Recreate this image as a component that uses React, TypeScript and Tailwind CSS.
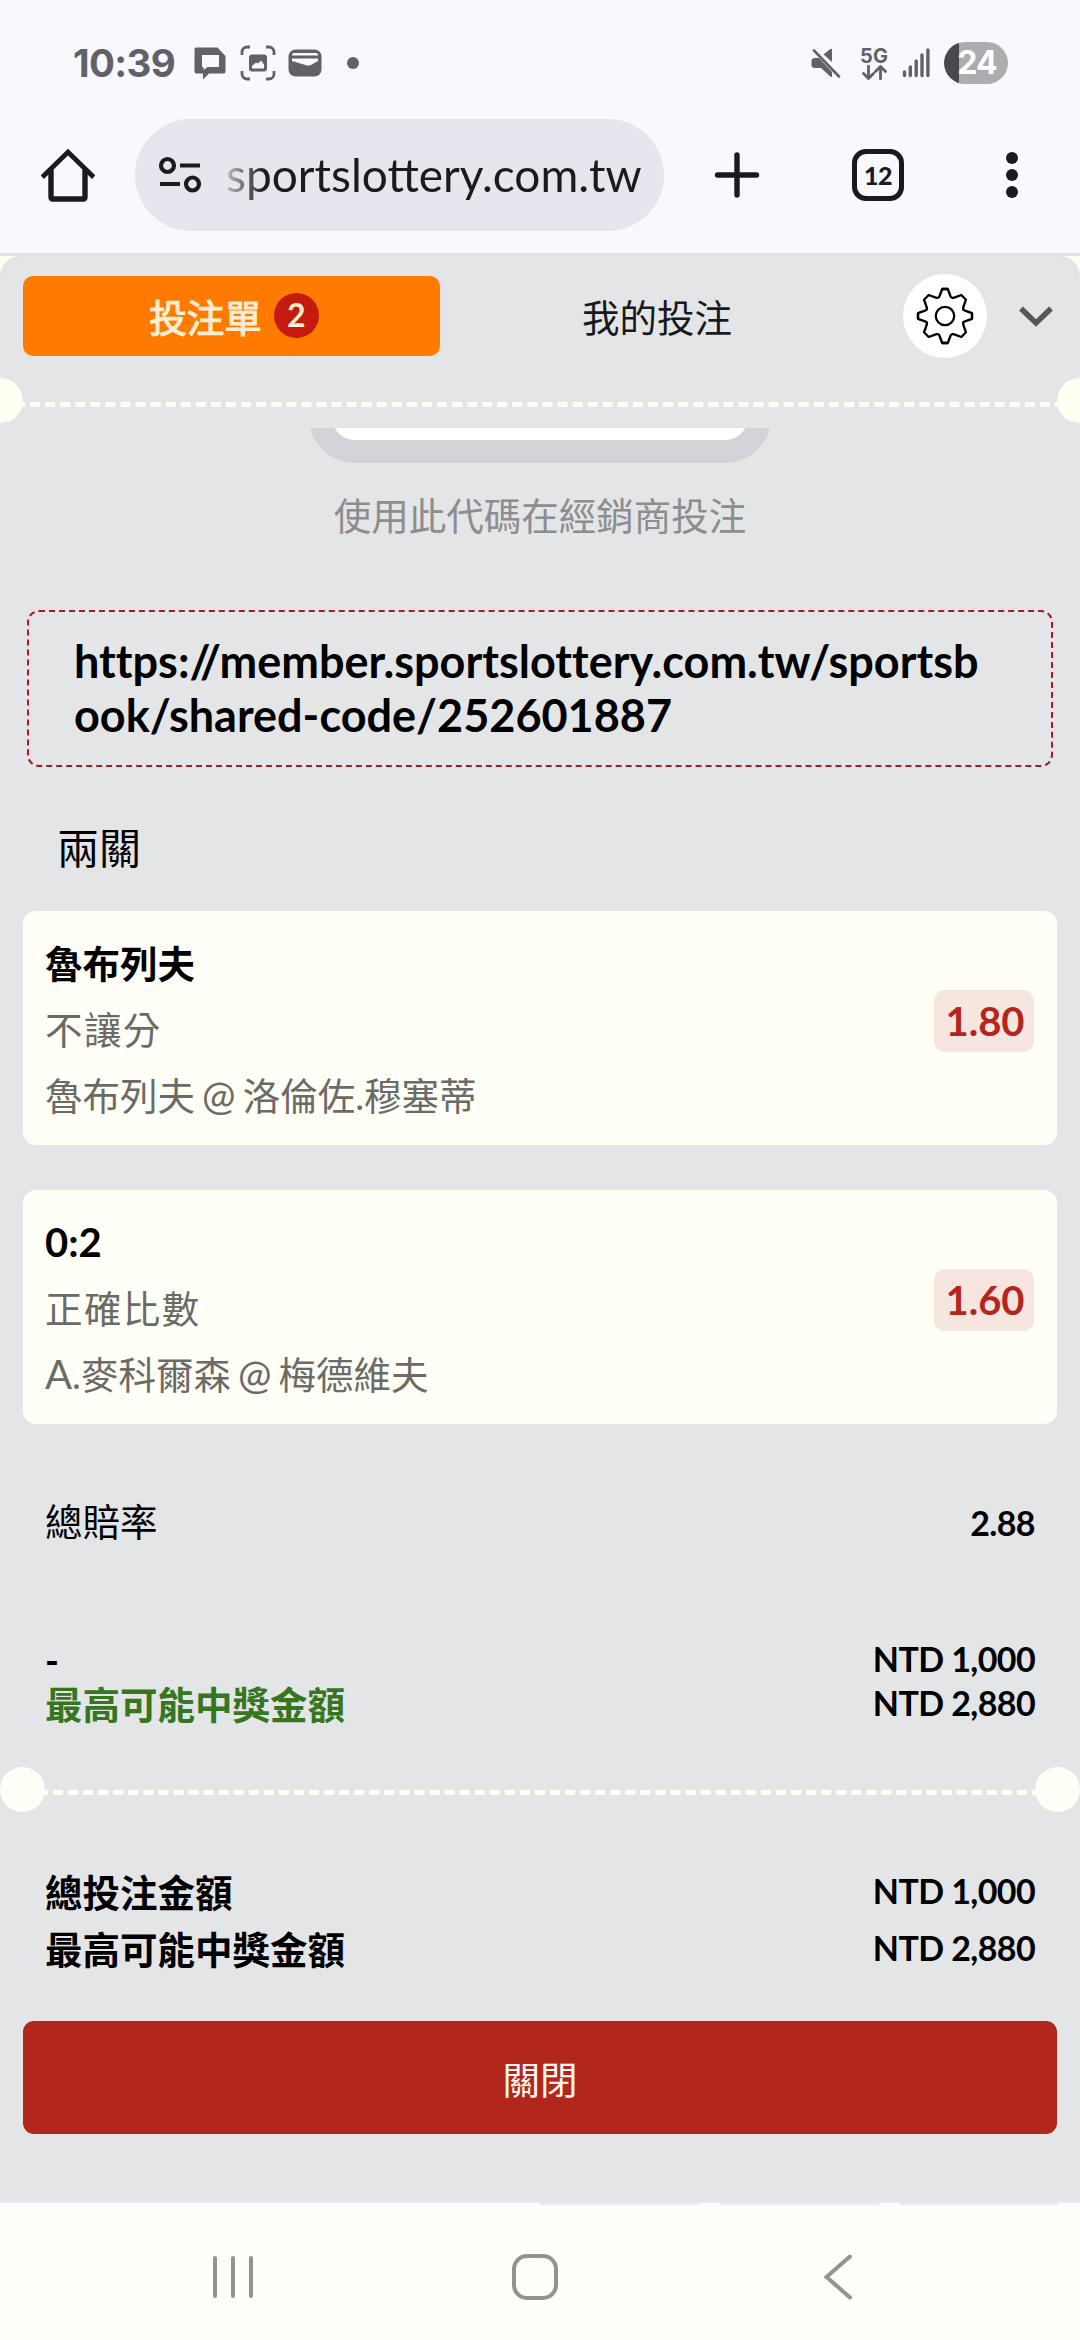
import React from "react";

const CJK = "font-['Lato','Noto_Sans_CJK_TC',sans-serif]";

function StatusBar() {
  return (
    <div className="flex h-[119px] items-start justify-between pt-[42px] pr-[72px] pl-[73px] text-[#626167]">
      <div className="flex h-[42px] items-center">
        <span className="w-[121px] whitespace-nowrap font-['Inter'] text-[38.5px] leading-none font-bold tracking-[-0.6px]">10:39</span>
        <svg width="32" height="34" viewBox="0 0 32 34" fill="currentColor">
          <path fillRule="evenodd" d="M2 1.500h21.500l8 8.500v15.500a2 2 0 0 1-2 2H15l-6 6v-6H2.500a2 2 0 0 1-2-2V3A1.500 1.500 0 0 1 2 1.500ZM8 9v12h1.500v3l4-3H25V9Z" />
        </svg>
        <svg className="ml-[14px]" width="36" height="36" viewBox="0 0 36 36" fill="none">
          <path d="M2 10V7a5 5 0 0 1 5-5h3M26 2h3a5 5 0 0 1 5 5v3M34 26v3a5 5 0 0 1-5 5h-3M10 34H7a5 5 0 0 1-5-5v-3" stroke="currentColor" strokeWidth="2.800" />
          <path fillRule="evenodd" d="M12 9.500h12a3 3 0 0 1 3 3v11a3 3 0 0 1-3 3H12a3 3 0 0 1-3-3v-11a3 3 0 0 1 3-3Zm0 14h12v-4l-3-4-3 3-2-1-4 3.500Z" fill="currentColor" />
        </svg>
        <svg className="ml-[12px]" width="34" height="28" viewBox="0 0 34 28" fill="none">
          <rect x="1.500" y="1.500" width="31" height="25" rx="6" fill="currentColor" stroke="currentColor" strokeWidth="2" />
          <path d="M4 6.500c0-2 1-2.500 3-2.500h20c2 0 3 .5 3 2.500ZM4 9.500h26v2.500l-8 4.500h-3L4 12Z" fill="#f9f8ff" />
        </svg>
        <span className="ml-[25px] h-3 w-3 rounded-full bg-current" />
      </div>
      <div className="flex h-[42px] items-center">
        <svg width="30" height="30" viewBox="0 0 30 30" fill="currentColor">
          <path d="M21 1v13L12.500 6.500 19 1.300Q20.500.3 21 1ZM4 10h4l13 14v4q0 1.500-1.500.8L10 20H4q-3.500 0-3.500-3v-4q0-3 3.500-3Z" />
          <path d="m3 2.500 25 26" stroke="currentColor" strokeWidth="2.600" strokeLinecap="round" />
        </svg>
        <div className="ml-[18px] flex w-[30px] flex-col items-center">
          <span className="font-['Inter'] text-[20px] leading-[18px] font-bold">5G</span>
          <svg width="25" height="15" viewBox="0 0 25 15" fill="none" stroke="currentColor" strokeWidth="2.800" strokeLinecap="round" strokeLinejoin="round">
            <path d="M6.500 1v12M1.500 8.500l5 5 5-5M18.500 14V2M13.500 6.500l5-5 5 5" />
          </svg>
        </div>
        <svg className="ml-[13px]" width="29" height="30" viewBox="0 0 29 30" stroke="currentColor" strokeWidth="3.400" strokeLinecap="round">
          <path d="M2.500 24v3.500M8.300 19v8.500M14.200 13v14.500M20 7v20.500M25.900 2v25.500" />
        </svg>
        <div className="ml-[13px] flex h-[42px] w-16 items-center justify-center rounded-full bg-linear-to-r from-[#49484c] from-[24%] to-[#adacb1] to-[24%] pl-[2px] font-['Inter'] text-[32px] leading-none font-bold tracking-[-1px] text-white">24</div>
      </div>
    </div>
  );
}

function AddressBar() {
  return (
    <div className="flex h-[112px] items-center pr-[62px] pl-[41px] text-[#1a1a20]">
      <svg width="54" height="54" viewBox="0 0 54 54" fill="none" stroke="currentColor" strokeWidth="5.400" strokeLinejoin="round">
        <path d="M3 27.500 27 4l24 23.500" strokeLinejoin="miter" strokeLinecap="square" strokeWidth="4.800" />
        <path d="M10 22v27.500a1.500 1.500 0 0 0 1.500 1.500h31a1.500 1.500 0 0 0 1.500-1.500V22" />
      </svg>
      <div className="ml-[40px] flex h-[112px] w-[529px] items-center rounded-full bg-[#e7e5ed] pl-[23px]">
        <svg width="44" height="38" viewBox="0 0 44 38" fill="none" stroke="currentColor" strokeWidth="4.200">
          <circle cx="9.500" cy="9.500" r="6.500" />
          <circle cx="34.500" cy="28" r="6.500" />
          <path d="M22 9.500h20M2 28h20" />
        </svg>
        <span className="ml-[24px] bg-linear-to-r from-[#1a1a20]/20 to-[#1a1a20] to-[38px] bg-clip-text font-['Lato'] text-[46px] leading-[56px] text-transparent">sportslottery.com.tw</span>
      </div>
      <svg className="ml-[50px] shrink-0" width="46" height="48" viewBox="0 0 46 48" stroke="currentColor" strokeWidth="5.400" strokeLinecap="round">
        <path d="M23 4v40M3.500 24h39" />
      </svg>
      <div className="ml-[92px] flex h-[52px] w-[52px] shrink-0 items-center justify-center rounded-[14px] border-[5.500px] border-current font-['Lato'] text-[25px] leading-none font-black tracking-[-0.5px]">12</div>
      <svg className="ml-[102px] shrink-0" width="12" height="48" viewBox="0 0 12 48" fill="currentColor">
        <circle cx="6" cy="7" r="6" />
        <circle cx="6" cy="24" r="6" />
        <circle cx="6" cy="41" r="6" />
      </svg>
    </div>
  );
}

function Gear() {
  const quarter = "M-2.800-27H2.800L5.400-20Q6-17.600 8.500-18.200L16.300-21 21-16.300 18.200-8.500Q17.600-6 20-5.400L27-2.800V2.800";
  return (
    <svg width="58" height="58" viewBox="-29 -29 58 58" fill="none" stroke="#000" strokeWidth="2.300" strokeLinejoin="round">
      <circle r="9.200" />
      <path d={quarter} />
      <path d={quarter} transform="rotate(90)" />
      <path d={quarter} transform="rotate(180)" />
      <path d={quarter} transform="rotate(270)" />
    </svg>
  );
}

function Tabs() {
  return (
    <div className="mb-[2px] flex h-[120px] shrink-0 items-center pl-[23px]">
      <div className="flex h-[80px] w-[417px] items-center justify-center rounded-[10px] bg-[#ff7a00] pl-[5px] text-[37.500px] leading-none text-[#ffedd2]">
        <span className="pt-[3px] [-webkit-text-stroke:1.2px_#ffedd2]">投注單</span>
        <span className="mb-[2px] ml-[12px] flex h-[45px] w-[45px] items-center justify-center rounded-full bg-[#c41a10] text-[32px] font-bold">2</span>
      </div>
      <div className="w-[434px] pt-[3px] text-center text-[37.500px] leading-none text-[#17191c]">我的投注</div>
      <div className="ml-[29px] flex h-[84px] w-[84px] items-center justify-center rounded-full bg-white">
        <Gear />
      </div>
      <svg className="ml-[31px]" width="36" height="22" viewBox="0 0 36 22" fill="none" stroke="#55585a" strokeWidth="5.500">
        <path d="m3 3.500 15 14.500L33 3.500" />
      </svg>
    </div>
  );
}

/* Latin letters, digits and @ are set slightly larger than the Chinese characters around them. */
function MixedText({ text }: { text: string }) {
  return (
    <>
      {text.split(/([A-Z0-9:@]+)/).map((part, i) =>
        i % 2 ? (
          <span key={i} className="text-[40px] leading-none">
            {part}
          </span>
        ) : (
          part
        ),
      )}
    </>
  );
}

function BetCard({ title, market, match, odds }: { title: string; market: string; match: string; odds: string }) {
  return (
    <div className="flex h-[234px] items-center justify-between rounded-[13px] bg-[#fffef7] pr-[23px] pl-[22px]">
      <div className="flex flex-col pt-[4px] text-[37.500px] leading-[66px]">
        <span className="font-bold text-black">
          <MixedText text={title} />
        </span>
        <span className="tracking-[1.400px] text-[#6b6b66]">{market}</span>
        <span className="[word-spacing:-2.500px] text-[#6b6b66]">
          <MixedText text={match} />
        </span>
      </div>
      <div className="mb-[14px] flex h-[62px] w-[100px] items-center justify-center rounded-[11px] bg-[#f7e6df] pl-[2px] text-[40px] font-bold text-[#b3261e]">{odds}</div>
    </div>
  );
}

function NavBar() {
  return (
    <div className="flex h-[137px] flex-col bg-[#fffdf7]">
      <div className="flex h-[2px] gap-[21px] pl-[540px]">
        <span className="w-[159px] bg-[#ececec]" />
        <span className="w-[159px] bg-[#ececec]" />
        <span className="w-[158px] bg-[#ececec]" />
      </div>
      <div className="flex items-start pt-[48px] pl-[211px]">
        <svg width="43" height="48" viewBox="0 0 43 48" stroke="#93928c" strokeWidth="4" strokeLinecap="round">
          <path d="M4 5v38M22 5v38M40 5v38" />
        </svg>
        <svg className="ml-[257px]" width="48" height="48" viewBox="0 0 48 48" fill="none" stroke="#93928c" strokeWidth="4">
          <rect x="3" y="3" width="42" height="42" rx="13" />
        </svg>
        <svg className="ml-[264px]" width="32" height="48" viewBox="0 0 32 48" fill="none" stroke="#93928c" strokeWidth="4" strokeLinecap="round">
          <path d="M27 3.500 3.500 24 27 44.500" />
        </svg>
      </div>
    </div>
  );
}

function AmountRow({ label, value, className = "", labelClass = "", valueClass = "" }: { label: string; value: string; className?: string; labelClass?: string; valueClass?: string }) {
  return (
    <div className={"flex items-center justify-between " + className}>
      <span className={"text-[37.500px] " + labelClass}>{label}</span>
      <span className={"text-[34px] font-bold tracking-[-0.6px] " + valueClass}>{value}</span>
    </div>
  );
}

export default function App() {
  return (
    <div className={"flex h-[2340px] w-[1080px] flex-col overflow-hidden bg-[#f9f8ff] text-black " + CJK}>
      <StatusBar />
      <AddressBar />
      <div className="mt-[22px] h-[3px] shrink-0 bg-[#e3e1e8]" />
      <div className="h-[1947px] shrink-0 bg-[#fffef2]">
        <div className="flex h-[1947px] flex-col rounded-t-[20px] bg-[#e4e5e7]">
          <Tabs />
          <div className="flex h-[45px] shrink-0 items-center">
            <span className="h-[45px] w-[23px] shrink-0 rounded-r-full bg-[#fffef2]" />
            <span className="-mx-2 mt-[7px] flex-1 border-t-[5px] border-dashed border-[#fffef2]" />
            <span className="h-[45px] w-[23px] shrink-0 rounded-l-full bg-[#fffef2]" />
          </div>
          <div className="mt-[5px] flex h-[35px] shrink-0 items-end justify-center overflow-hidden">
            <div className="h-[120px] w-[462px] shrink-0 rounded-[46px] border-[23px] border-[#d3d4d9] bg-white" />
          </div>
          <div className="mt-[25px] h-[56px] shrink-0 text-center text-[37.500px] leading-[56px] text-[#8c8d8f]">使用此代碼在經銷商投注</div>
          <div className="mx-[27px] mt-[66px] h-[157px] shrink-0 rounded-[12px] border-2 border-dashed border-[#a81c28] pt-[22px] pr-[62px] pl-[45px] text-[45px] leading-[54px] font-bold break-all [font-variant-ligatures:none]">
            https://member.sportslottery.com.tw/sportsbook/shared-code/252601887
          </div>
          <div className="mt-[49px] h-[64px] shrink-0 pl-[57px] text-[42px] leading-[64px]">兩關</div>
          <div className="mx-[23px] mt-[31px] flex shrink-0 flex-col gap-[45px]">
            <BetCard title="魯布列夫" market="不讓分" match="魯布列夫 @ 洛倫佐.穆塞蒂" odds="1.80" />
            <BetCard title="0:2" market="正確比數" match="A.麥科爾森 @ 梅德維夫" odds="1.60" />
          </div>
          <div className="mt-[72px] shrink-0 px-[45px]">
            <AmountRow className="h-[52px]" label="總賠率" value="2.88" />
            <AmountRow className="mt-[84px] h-[52px]" label="-" value="NTD 1,000" labelClass="pt-[6px] font-bold" />
            <AmountRow className="-mt-[8px] h-[52px]" label="最高可能中獎金額" value="NTD 2,880" labelClass="pt-[6px] font-bold text-[#35761f]" />
          </div>
          <div className="mt-[39px] flex h-[45px] shrink-0 items-center">
            <span className="h-[45px] w-[45px] shrink-0 rounded-full bg-[#fffef7]" />
            <span className="-mx-[7px] mt-[6px] flex-1 border-t-[5px] border-dashed border-[#fffef7]" />
            <span className="h-[45px] w-[45px] shrink-0 rounded-full bg-[#fffef7]" />
          </div>
          <div className="mt-[53px] shrink-0 px-[45px]">
            <AmountRow className="h-[57px]" label="總投注金額" value="NTD 1,000" labelClass="font-bold" valueClass="pb-[7px]" />
            <AmountRow className="h-[57px]" label="最高可能中獎金額" value="NTD 2,880" labelClass="font-bold" valueClass="pb-[7px]" />
          </div>
          <div className="mx-[23px] mt-[42px] flex h-[113px] shrink-0 items-center justify-center rounded-[11px] bg-[#b3261b] pt-[5px] text-[37.500px] text-[#fff8f0]">關閉</div>
          <div className="mt-[36px] flex-1 bg-linear-to-b from-[#e4e5e7] to-[#e8e7ec]" />
        </div>
      </div>
      <NavBar />
    </div>
  );
}
